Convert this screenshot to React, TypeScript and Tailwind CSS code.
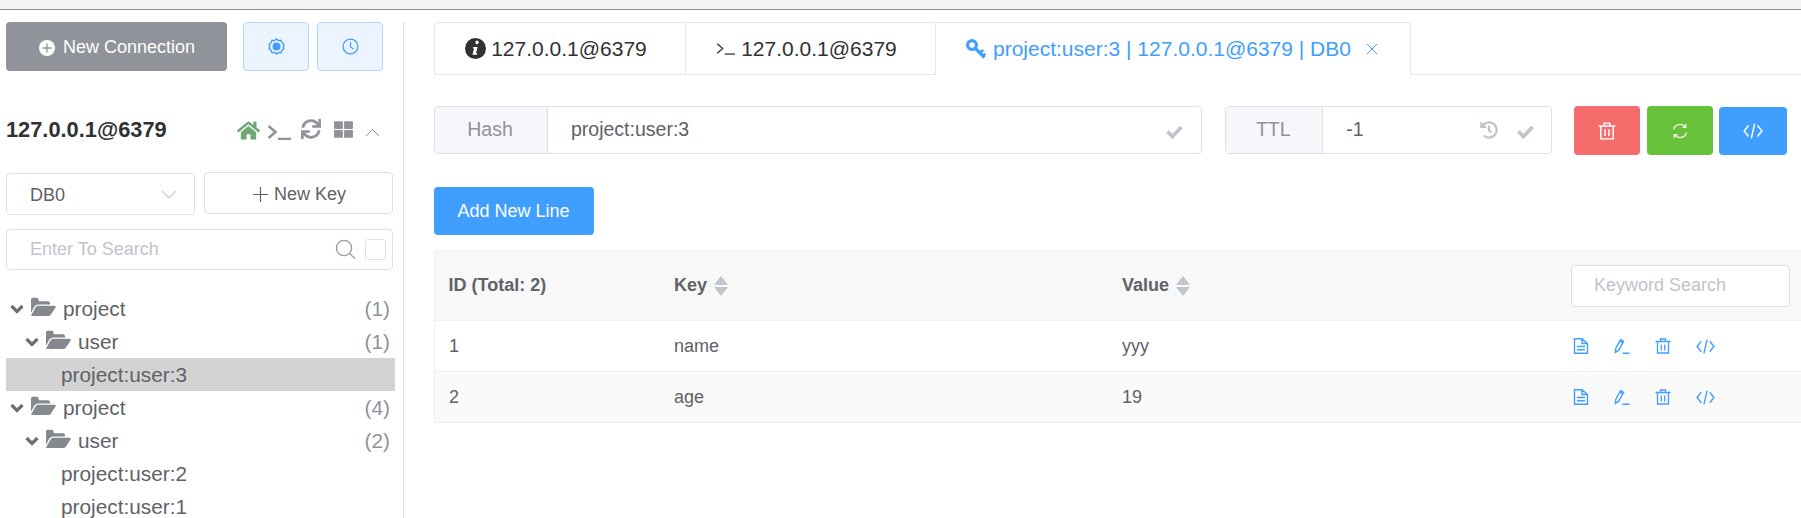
import React from "react";
import { FaHome, FaSync, FaThLarge, FaHistory } from "react-icons/fa";

const Svg = ({ size, className, children, vb = "0 0 24 24" }: { size: number; className?: string; children: React.ReactNode; vb?: string }) => (
  <svg width={size} height={size} viewBox={vb} fill="none" stroke="currentColor" strokeWidth={1.6} className={className}>{children}</svg>
);

const PlusCircle = () => (
  <svg width="18" height="18" viewBox="0 0 18 18"><circle cx="9" cy="9" r="8" fill="#fff" /><path d="M9 4.5v9M4.5 9h9" stroke="#909399" strokeWidth="1.3" /></svg>
);
const Gear = () => (
  <svg width="17" height="17" viewBox="0 0 17 17" className="text-[#409eff]">
    <path d="M8.5 1l2 1.6 2.5-.3 1 2.4 2 1.5-.7 2.3.7 2.3-2 1.5-1 2.4-2.5-.3-2 1.6-2-1.6-2.5.3-1-2.4-2-1.5.7-2.3-.7-2.3 2-1.5 1-2.4 2.5.3z" fill="none" stroke="currentColor" strokeWidth="1.4" />
    <circle cx="8.5" cy="8.5" r="4" fill="currentColor" />
  </svg>
);
const Clock = () => (
  <svg width="17" height="17" viewBox="0 0 17 17" fill="none" stroke="#409eff" strokeWidth="1.2"><circle cx="8.5" cy="8.5" r="7.4" /><path d="M8.5 4v5l3 2" /></svg>
);
const Term = ({ w, h, sw, className }: { w: number; h: number; sw: number; className?: string }) => (
  <svg width={w} height={h} viewBox="0 0 24 16" fill="none" stroke="currentColor" strokeWidth={sw} className={className}><path d="M1.5 2l7 6-7 6" /><path d="M11 15h13" /></svg>
);
const Chevron = ({ up, size, className }: { up?: boolean; size: number; className?: string }) => (
  <svg width={size} height={size * 0.6} viewBox="0 0 15 9" fill="none" stroke="currentColor" strokeWidth="1" className={className}><path d={up ? "M1 8l6.5-6.5L14 8" : "M1 1l6.5 6.5L14 1"} /></svg>
);
const Search = () => (
  <svg width="21" height="21" viewBox="0 0 21 21" fill="none" stroke="#9a9da4" strokeWidth="1.4"><circle cx="9" cy="9" r="7.6" /><path d="M14.5 14.5l5.5 5" /></svg>
);
const Info = () => (
  <svg width="21" height="21" viewBox="0 0 21 21" className="mr-[5px]"><circle cx="10.5" cy="10.5" r="10.5" fill="#303133" /><path d="M10.6 3.8a1.6 1.6 0 1 1 2.9 1.3 1.6 1.6 0 1 1-2.9-1.3zM8.3 9h4.3l-1.6 6h1.2l-.4 1.7H7.4l1.7-6.3H7.9z" fill="#fff" /></svg>
);
const Key = () => (
  <svg width="20" height="20" viewBox="0 0 20 20" fill="none" stroke="currentColor" className="mr-[7px]">
    <circle cx="6" cy="6" r="4.4" strokeWidth="3.2" />
    <path d="M9.5 9.5l9 9" strokeWidth="3.2" />
    <path d="M14 14l3.2-3.2M17 17l2.4-2.4" strokeWidth="2.6" />
  </svg>
);
const Check = ({ className = "" }: { className?: string }) => (
  <svg width="17" height="15" viewBox="0 0 17 15" fill="none" stroke="#c0c4cc" strokeWidth="3.8" className={className}><path d="M1.5 7.5L6.5 12.5L15.5 3" /></svg>
);
const FolderOpen = () => (
  <svg width="25" height="20" viewBox="0 0 25 19.5" className="mr-[6px] -translate-y-[2px] text-[#85888e]" fill="currentColor">
    <path d="M0 15.5V2Q0 .5 1.5 .5H6Q7.5 .5 7.5 2V3Q7.5 4 9 4H17Q19 4 19 6V7.3H7.5Q5 7.3 3.5 9Z" />
    <path d="M5 9.6Q6 8.6 7.5 8.6H23.3Q25.6 8.6 24.4 10.4L20 17.2Q19 18.8 17 18.8H1.6Q-.6 18.8 .6 17.2Z" />
  </svg>
);
const ChevDown = () => (
  <svg width="14" height="10" viewBox="0 0 14 10" fill="none" stroke="#6c6f75" strokeWidth="3.2" className="mr-[7px]"><path d="M1.5 2L7 7.5 12.5 2" /></svg>
);
const Doc = () => (
  <Svg size={16} vb="0 0 16 16"><path d="M1.5 .8h7.5l5.5 4.7V15.3H1.5zM9 1v4.5h5.5M4 8.5h8M4 11.7h8" strokeWidth="1.4" /></Svg>
);
const Edit = () => (
  <Svg size={16} vb="0 0 16 16"><path d="M1.7 10.5L6.5 1.6 9.6 3.3 4.8 12.2 1.4 14.4zM5.6 2.8L9 4.8M8.5 15.2H15.5" strokeWidth="1.4" /></Svg>
);
const Trash = ({ size = 16 }: { size?: number }) => (
  <Svg size={size} vb="0 0 16 16"><path d="M0.5 3.5h15M2.5 3.5V15h11V3.5M5.5 3.5V1h5v2.5M6.3 6.5v6M9.7 6.5v6" strokeWidth="1.3" /></Svg>
);
const Code = ({ size = 19 }: { size?: number }) => (
  <Svg size={size} vb="0 0 18 18"><path d="M5 4L1 9l4 5M13 4l4 5-4 5M10.5 2.5l-3 13" strokeWidth="1.3" /></Svg>
);
const Refresh = () => (
  <Svg size={16} vb="0 0 15 15"><path d="M1.5 6a6.2 6.2 0 0 1 11-2.2M13.5 9a6.2 6.2 0 0 1-11 2.2M12.8 1v3.2H9.8M2.2 14v-3.2h3" strokeWidth="1.2" /></Svg>
);
const Carets = () => (
  <span className="ml-[7px] flex flex-col gap-[2px]">
    <span className="h-0 w-0 border-x-[7px] border-b-[9px] border-x-transparent border-b-[#c0c4cc]" />
    <span className="h-0 w-0 border-x-[7px] border-t-[9px] border-x-transparent border-t-[#c0c4cc]" />
  </span>
);

const Folder = ({ depth, label, count }: { depth: number; label: string; count: number }) => (
  <div className={`flex h-[33px] items-center pr-[5px] text-[20.8px] text-[#606266] ${depth === 0 ? "pl-[4px]" : "pl-[19px]"}`}>
    <ChevDown />
    <FolderOpen />
    <span className="ml-[1px]">{label}</span>
    <span className="ml-auto text-[#909399]">({count})</span>
  </div>
);
const Leaf = ({ label, active }: { label: string; active?: boolean }) => (
  <div className={`flex h-[33px] items-center pl-[55px] text-[20.8px] text-[#606266] ${active ? "bg-[#d3d3d3]" : ""}`}>{label}</div>
);

const Cell = ({ children, className = "" }: { children?: React.ReactNode; className?: string }) => (
  <div className={`flex items-center ${className}`}>{children}</div>
);

const Row = ({ id, k, v, alt }: { id: string; k: string; v: string; alt?: boolean }) => (
  <div className={`grid h-[51px] grid-cols-[239px_448px_449px_1fr] border-b border-[#ebeef5] text-[18px] text-[#606266] ${alt ? "bg-[#fafafa]" : "bg-white"}`}>
    <Cell className="pl-[14px]">{id}</Cell>
    <Cell>{k}</Cell>
    <Cell>{v}</Cell>
    <Cell className="gap-[25px] pl-[2px] text-[#409eff]"><Doc /><Edit /><Trash /><Code /></Cell>
  </div>
);

export default function App() {
  return (
    <div className="h-[518px] w-[1801px] overflow-hidden bg-white font-['Liberation_Sans',Arial,sans-serif]">
      <div className="h-[10px] border-b border-[#8d8d84] bg-[#f3f3f3]" />
      <div className="flex h-[508px] pt-[12px]">
        <aside className="w-[404px] shrink-0 border-r border-[#dcdfe6] pl-[6px]">
          <div className="flex gap-[16px]">
            <button className="flex h-[49px] w-[221px] items-center justify-center gap-[7px] rounded-[4px] bg-[#909399] pt-[2px] text-[18px] text-white"><PlusCircle />New Connection</button>
            <div className="flex gap-[8px]">
              <button className="flex h-[49px] w-[66px] items-center justify-center rounded-[4px] border border-[#b3d8ff] bg-[#ecf5ff]"><Gear /></button>
              <button className="flex h-[49px] w-[66px] items-center justify-center rounded-[4px] border border-[#b3d8ff] bg-[#ecf5ff]"><Clock /></button>
            </div>
          </div>
          <div className="mt-[37px] flex h-[45px] items-center">
            <span className="text-[21.8px] font-bold text-[#303133]">127.0.0.1@6379</span>
            <div className="ml-[70px] flex items-center text-[#909399]">
              <FaHome className="text-[23px] text-[#6fa876]" />
              <Term w={24} h={16} sw={2.6} className="ml-[7px] mt-[2px]" />
              <FaSync className="ml-[10px] -translate-y-[2px] text-[20px]" />
              <FaThLarge className="ml-[13px] -translate-y-[1px] text-[19px]" />
              <Chevron up size={15} className="ml-[12px] mt-[4px]" />
            </div>
          </div>
          <div className="mt-[19px] w-[387px]">
            <div className="flex gap-[9px]">
              <div className="mt-[1px] flex h-[42px] w-[189px] items-center justify-between rounded-[4px] border border-[#dcdfe6] pl-[23px] pr-[17px] pt-[2px] text-[18px] text-[#606266]">DB0<Chevron size={16} className="text-[#c0c4cc]" /></div>
              <button className="flex h-[42px] w-[189px] items-center justify-center gap-[6px] rounded-[4px] border border-[#dcdfe6] pl-[2px] pt-[2px] text-[18px] text-[#606266]">
                <svg width="15" height="15" viewBox="0 0 15 15" stroke="currentColor" strokeWidth="1.2"><path d="M7.5 0v15M0 7.5h15" /></svg>New Key
              </button>
            </div>
            <div className="mt-[14px] flex h-[41px] items-center rounded-[4px] border border-[#dcdfe6] pl-[23px] pr-[6px] text-[18px] text-[#c0c4cc]">
              Enter To Search
              <span className="ml-auto"><Search /></span>
              <span className="ml-[9px] h-[21px] w-[21px] rounded-[3px] border border-[#dcdfe6]" />
            </div>
          </div>
          <div className="mt-[22px] w-[389px]">
            <Folder depth={0} label="project" count={1} />
            <Folder depth={1} label="user" count={1} />
            <Leaf label="project:user:3" active />
            <Folder depth={0} label="project" count={4} />
            <Folder depth={1} label="user" count={2} />
            <Leaf label="project:user:2" />
            <Leaf label="project:user:1" />
          </div>
        </aside>
        <main className="min-w-0 flex-1 pl-[30px]">
          <div className="flex h-[53px] text-[21px] text-[#303133]">
            <div className="flex w-[251px] items-center justify-center rounded-tl-[4px] border border-r-0 border-[#e4e7ed] pr-[8px]"><Info />127.0.0.1@6379</div>
            <div className="flex w-[250px] items-center justify-center border-y border-l border-[#e4e7ed] pr-[8px]"><Term w={19} h={13} sw={1.6} className="mr-[6px]" />127.0.0.1@6379</div>
            <div className="flex w-[476px] items-center rounded-tr-[4px] border-x border-t border-[#e4e7ed] pl-[30px] text-[#409eff]">
              <Key />project:user:3 | 127.0.0.1@6379 | DB0
              <svg width="12" height="12" viewBox="0 0 12 12" stroke="currentColor" strokeWidth="1" className="ml-[15px]"><path d="M1 1l10 10M11 1L1 11" /></svg>
            </div>
            <div className="flex-1 border-b border-[#e4e7ed]" />
          </div>
          <div className="mt-[31px] flex items-start pr-[14px]">
            <div className="flex h-[48px] w-[769px] rounded-[4px] border border-[#dcdfe6] text-[19.5px]">
              <div className="flex w-[113px] items-center justify-center rounded-l-[4px] border-r border-[#dcdfe6] bg-[#f5f7fa] pr-[2px] text-[#909399]">Hash</div>
              <div className="flex flex-1 items-center justify-between pl-[23px] pr-[18px] text-[#606266]">project:user:3<Check className="mt-[2px]" /></div>
            </div>
            <div className="ml-[23px] flex h-[48px] w-[327px] rounded-[4px] border border-[#dcdfe6] text-[19.5px]">
              <div className="flex w-[97px] items-center justify-center rounded-l-[4px] border-r border-[#dcdfe6] bg-[#f5f7fa] pr-[2px] text-[#909399]">TTL</div>
              <div className="flex flex-1 items-center pl-[23px] pr-[17px] text-[#606266]">-1
                <FaHistory className="ml-auto text-[18px] text-[#c0c4cc]" />
                <Check className="ml-[19px] mt-[2px]" />
              </div>
            </div>
            <div className="ml-[22px] flex items-start text-white">
              <button className="flex h-[49px] w-[66px] items-center justify-center rounded-[4px] bg-[#f56c6c]"><Trash size={18} /></button>
              <button className="ml-[7px] flex h-[49px] w-[66px] items-center justify-center rounded-[4px] bg-[#67c23a]"><Refresh /></button>
              <button className="ml-[6px] mt-[1px] flex h-[48px] w-[68px] items-center justify-center rounded-[4px] bg-[#409eff]"><Code size={20} /></button>
            </div>
          </div>
          <button className="mt-[32px] block h-[48px] w-[160px] rounded-[4px] bg-[#409eff] pr-[1px] text-[18px] text-white">Add New Line</button>
          <div className="mt-[15px] rounded-tl-[4px] border-l border-t border-[#ebeef5]">
            <div className="grid h-[70px] grid-cols-[239px_448px_449px_1fr] border-b border-[#ebeef5] bg-[#f8f8f9] text-[18px] font-bold text-[#606266]">
              <Cell className="pl-[13.5px]">ID (Total: 2)</Cell>
              <Cell>Key<Carets /></Cell>
              <Cell>Value<Carets /></Cell>
              <Cell>
                <div className="flex h-[42px] w-[219px] items-center rounded-[4px] border border-[#dcdfe6] bg-white pl-[22px] text-[18px] font-normal text-[#c0c4cc]">Keyword Search</div>
              </Cell>
            </div>
            <Row id="1" k="name" v="yyy" />
            <Row id="2" k="age" v="19" alt />
          </div>
        </main>
      </div>
    </div>
  );
}
